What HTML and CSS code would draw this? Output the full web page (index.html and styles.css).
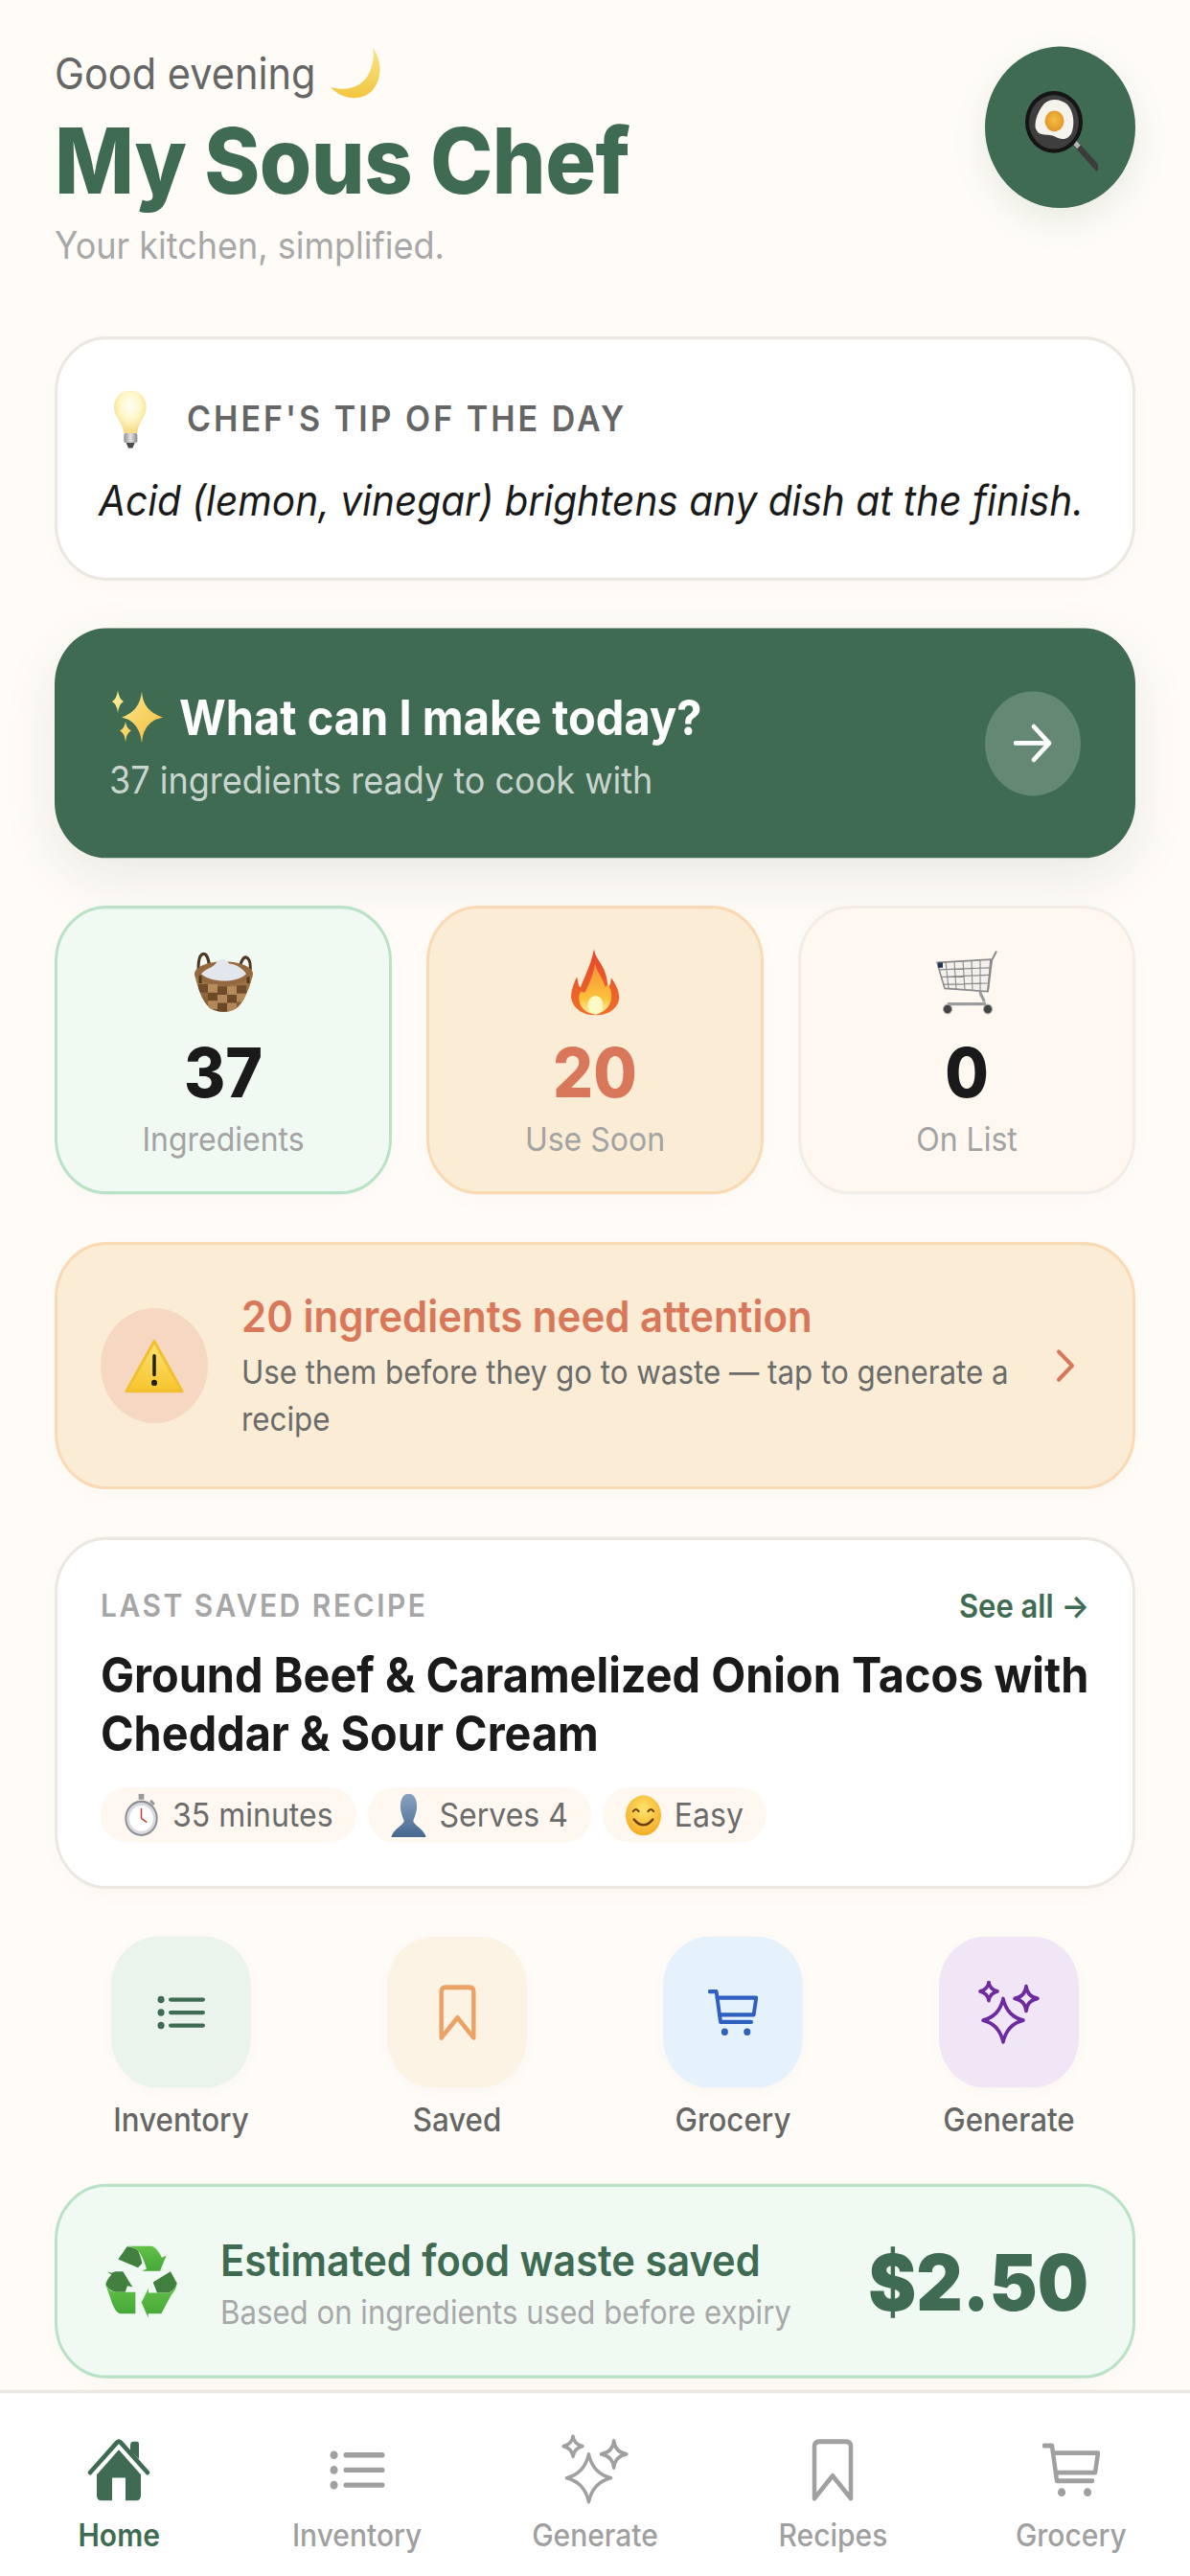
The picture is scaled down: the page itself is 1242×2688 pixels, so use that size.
FILE: index.html
```html
<!DOCTYPE html>
<html lang="en">
<head>
<meta charset="utf-8">
<title>My Sous Chef</title>
<link rel="stylesheet" href="styles.css">
</head>
<body>
<svg class="defs" width="0" height="0" aria-hidden="true">
  <defs>
    <linearGradient id="gMoon" x1="0" y1="0" x2="0" y2="1"><stop offset="0" stop-color="#f6e58a"/><stop offset="1" stop-color="#f3c63f"/></linearGradient>
    <radialGradient id="gBulb" cx=".5" cy=".36" r=".6"><stop offset="0" stop-color="#fffff4"/><stop offset=".55" stop-color="#fff6c8"/><stop offset="1" stop-color="#f6dc86"/></radialGradient>
    <linearGradient id="gBase" x1="0" y1="0" x2="1" y2="0"><stop offset="0" stop-color="#8f8f8f"/><stop offset=".5" stop-color="#e2e2e2"/><stop offset="1" stop-color="#8a8a8a"/></linearGradient>
    <linearGradient id="gSpark" x1="0" y1="0" x2="1" y2="1"><stop offset="0" stop-color="#fff0a0"/><stop offset="1" stop-color="#f3b933"/></linearGradient>
    <linearGradient id="gFire" x1="0" y1="0" x2="0" y2="1"><stop offset="0" stop-color="#e5452a"/><stop offset="1" stop-color="#f0702a"/></linearGradient>
    <linearGradient id="gFire2" x1="0" y1="0" x2="0" y2="1"><stop offset="0" stop-color="#f6913a"/><stop offset=".7" stop-color="#fcc33a"/><stop offset="1" stop-color="#fff6a8"/></linearGradient>
    <linearGradient id="gWarn" x1="0" y1="0" x2="0" y2="1"><stop offset="0" stop-color="#fde272"/><stop offset="1" stop-color="#f6c52e"/></linearGradient>
    <linearGradient id="gBust" x1="0" y1="0" x2="0" y2="1"><stop offset="0" stop-color="#8aa3c2"/><stop offset="1" stop-color="#46688f"/></linearGradient>
    <radialGradient id="gSmile" cx=".5" cy=".35" r=".7"><stop offset="0" stop-color="#ffe46b"/><stop offset="1" stop-color="#f3a71f"/></radialGradient>
    <linearGradient id="gRec" x1="0" y1="0" x2="0" y2="1"><stop offset="0" stop-color="#62c146"/><stop offset="1" stop-color="#46a73a"/></linearGradient>
    <radialGradient id="gYolk" cx=".5" cy=".45" r=".55"><stop offset="0" stop-color="#f5bf45"/><stop offset="1" stop-color="#df9427"/></radialGradient>
    <linearGradient id="gBasket" x1="0" y1="0" x2="0" y2="1"><stop offset="0" stop-color="#a87a48"/><stop offset="1" stop-color="#7d5630"/></linearGradient>
    <clipPath id="cBasket"><path d="M2 22C6 36 10 48 18 54 27 59 38 59 46 54 54 48 59 36 63 22Z"/></clipPath>
  </defs>
</svg>
<div class="page">
  <main class="content">
    <header class="top">
      <div class="top-text">
        <p class="greet">Good evening <svg class="e-moon" viewBox="0 0 52 50"><path fill="url(#gMoon)" d="M44 0C54 12 54 30 44 41 33 52 12 51 0 38 17 43 32 38 39 27 44 18 46 9 44 0Z"/></svg></p>
        <h1 class="title">My Sous Chef</h1>
        <p class="subtitle">Your kitchen, simplified.</p>
      </div>
      <div class="avatar">
        <svg class="e-pan" viewBox="0 0 76 77">
          <path d="M52 50 75 74" stroke="#3c3c3c" stroke-width="6" stroke-linecap="round"/>
          <path d="M50 48 56 54" stroke="#b5b5b5" stroke-width="5"/>
          <circle cx="30" cy="30" r="30" fill="#151515"/>
          <circle cx="30" cy="30" r="26" fill="#3e3e3e"/>
          <path fill="#f5f3ec" d="M20 12C27 6 38 8 44 13 50 19 52 30 49 39 46 47 38 48 31 44 25 41 14 44 12 38 8 33 13 19 20 12Z"/>
          <circle cx="30.500" cy="29" r="10" fill="url(#gYolk)"/>
        </svg>
      </div>
    </header>

    <section class="card tip">
      <div class="tip-head">
        <svg class="e-bulb" viewBox="9 36 180 186" preserveAspectRatio="none">
          <path fill="url(#gBulb)" d="M108 40C78 40 57 62 57 93 57 125 85 140 88 175H130C132 140 158 125 158 93 158 62 138 40 108 40Z"/>
          <rect x="88" y="175" width="42" height="30" rx="5" fill="url(#gBase)"/>
          <path d="M95 205H122L115 222H102Z" fill="#4a4a4a"/>
        </svg>
        <span class="tip-label">CHEF'S TIP OF THE DAY</span>
      </div>
      <p class="tip-text">Acid (lemon, vinegar) brightens any dish at the finish.</p>
    </section>

    <section class="hero">
      <div class="hero-text">
        <p class="hero-title"><svg class="e-spark" viewBox="0 0 56 51"><path fill="url(#gSpark)" d="M34 1Q35 20 56 26 35 30 34 51 32 30 13 26 32 20 34 1ZM9 0Q10 8 15 11 10 13 9 22 8 13 3 11 8 8 9 0ZM17 30Q18 37 23 39 18 41 17 50 16 41 11 39 16 37 17 30Z"/></svg><span>What can I make today?</span></p>
        <p class="hero-sub">37 ingredients ready to cook with</p>
      </div>
      <div class="hero-go">
        <svg class="i-arrow" viewBox="0 0 40 38"><path d="M2 19H37M21 3 37 19 21 35" fill="none" stroke="#fff" stroke-width="4.5" stroke-linecap="round" stroke-linejoin="round"/></svg>
      </div>
    </section>

    <section class="stats">
      <div class="stat stat-green">
        <div class="stat-icon">
          <svg class="e-basket" viewBox="0 0 65 58">
            <path d="M8 30C3 6 9 0 13 2 17 4 18 14 19 26M46 30C48 14 52 4 56 5 61 7 62 14 58 30" fill="none" stroke="#4e3620" stroke-width="3"/>
            <ellipse cx="32.500" cy="21" rx="30.500" ry="12" fill="#94693f"/>
            <path fill="#e3e6ec" d="M9 21C14 15 20 16 25 10 29 5 36 6 38 11 44 11 52 15 56 21 46 30 20 30 9 21Z"/>
            <path d="M2 22C6 36 10 48 18 54 27 59 38 59 46 54 54 48 59 36 63 22 52 36 14 36 2 22Z" fill="url(#gBasket)"/>
            <g clip-path="url(#cBasket)">
              <path d="M6 31H16V39H6ZM26 33H36V41H26ZM46 32H56V40H46ZM16 39H26V47H16ZM36 41H46V49H36ZM26 49H36V57H26Z" fill="#5f3f22" opacity=".7"/>
              <path d="M16 31H26V39H16ZM36 33H46V41H36ZM26 41H36V49H26ZM46 40H56V48H46ZM16 47H26V55H16ZM36 49H46V57H36Z" fill="#c49a68" opacity=".7"/>
            </g>
            <path d="M8 30C8 22 8 24 8 24M58 30V24" stroke="#4e3620" stroke-width="3"/>
          </svg>
        </div>
        <div class="stat-num">37</div>
        <div class="stat-label">Ingredients</div>
      </div>
      <div class="stat stat-orange">
        <div class="stat-icon">
          <svg class="e-fire" viewBox="0 0 51 64">
            <path fill="url(#gFire)" d="M24 0C25 9 33 14 36 24 38 30 38 35 39 36 42 35 41 31 42 28 47 34 51 42 50 49 48 59 37 64 25 64 13 64 2 58 0 47 0 39 4 31 6 27 8 32 7 36 10 37 13 28 21 16 24 0Z"/>
            <path fill="url(#gFire2)" d="M25 14C27 22 33 28 36 37 38 33 39 34 41 38 44 47 42 59 26 63 12 62 6 52 9 43 11 39 12 44 15 41 19 33 23 26 25 14Z"/>
            <ellipse cx="25.500" cy="54" rx="8" ry="9" fill="#fff9c4"/>
          </svg>
        </div>
        <div class="stat-num stat-num-warn">20</div>
        <div class="stat-label">Use Soon</div>
      </div>
      <div class="stat stat-cream">
        <div class="stat-icon">
          <svg class="e-cart" viewBox="0 0 64 63" fill="none" stroke="#8a8a8a">
            <path d="M1 12 57 9 54 40 9 37Z" fill="#e9e9e9" fill-opacity=".45" stroke-width="1.6"/>
            <path d="M10 11 13 37M19 11 21 38M28 10 30 38M37 10 38 39M46 10 46 39M3 19 56 17M5 26 55 24M7 33 54 32" stroke-width="1.1"/>
            <path d="M54 40 58 10 63 1" stroke-width="2"/>
            <path d="M46 40C47 46 50 46 50 50M12 52H52" stroke="#9c9c9c" stroke-width="3"/>
            <rect x="2" y="12" width="5" height="5" fill="#26365a" stroke="none"/>
            <circle cx="12" cy="57" r="4.500" fill="#444" stroke="#aaa"/>
            <circle cx="54" cy="57" r="4.500" fill="#444" stroke="#aaa"/>
          </svg>
        </div>
        <div class="stat-num">0</div>
        <div class="stat-label">On List</div>
      </div>
    </section>

    <section class="alert">
      <div class="alert-icon">
        <svg class="e-warn" viewBox="0 0 62 53">
          <path fill="url(#gWarn)" stroke="#f2c02e" stroke-width="3" stroke-linejoin="round" d="M31 3 60 51H2Z"/>
          <path d="M31 17V35" stroke="#222" stroke-width="3.500" stroke-linecap="round"/>
          <circle cx="31" cy="43" r="3" fill="#222"/>
        </svg>
      </div>
      <div class="alert-text">
        <p class="alert-title">20 ingredients need attention</p>
        <p class="alert-sub">Use them before they go to waste — tap to generate a recipe</p>
      </div>
      <svg class="i-chev" viewBox="0 0 20 33"><path d="M3 3 17 16.500 3 30" fill="none" stroke="#d9775a" stroke-width="4" stroke-linecap="round" stroke-linejoin="round"/></svg>
    </section>

    <section class="card recipe">
      <div class="recipe-head">
        <span class="recipe-label">LAST SAVED RECIPE</span>
        <span class="recipe-link">See all →</span>
      </div>
      <h2 class="recipe-title">Ground Beef &amp; Caramelized Onion Tacos with Cheddar &amp; Sour Cream</h2>
      <div class="chips">
        <span class="chip"><svg class="e-chip" viewBox="0 0 36 44">
          <rect x="15" y="0" width="6" height="6" fill="#9a9a9a"/><path d="M28 7 32 11" stroke="#999" stroke-width="3"/>
          <circle cx="18" cy="25" r="17" fill="#d8dade" stroke="#8d8f95" stroke-width="2"/><circle cx="18" cy="25" r="13" fill="#fff"/>
          <path d="M18 25V15M18 25 24 29" stroke="#c0392b" stroke-width="1.500"/></svg>35 minutes</span>
        <span class="chip"><svg class="e-chip" viewBox="0 0 38 44">
          <path fill="url(#gBust)" d="M19 0C26 0 28 7 28 13 28 19 25 24 24 28 26 33 36 36 38 44H0C2 36 12 33 14 28 13 24 10 19 10 13 10 7 12 0 19 0Z"/></svg>Serves 4</span>
        <span class="chip"><svg class="e-chip" viewBox="0 0 38 40">
          <ellipse cx="19" cy="20" rx="19" ry="20" fill="url(#gSmile)"/>
          <path d="M8 16Q11 12 14 16M24 16Q27 12 30 16" fill="none" stroke="#6b3f10" stroke-width="2" stroke-linecap="round"/>
          <path d="M9 24Q19 35 29 24" fill="none" stroke="#6b3f10" stroke-width="2.500" stroke-linecap="round"/></svg>Easy</span>
      </div>
    </section>

    <nav class="quick">
      <div class="quick-item">
        <div class="tile tile-green"><svg class="q-list" viewBox="0 0 50 33" fill="none" stroke="#3f6b52" stroke-width="4" stroke-linecap="round"><path d="M14 4H48M14 16.500H48M14 29H48"/><path d="M4 4H4.100M4 16.500H4.100M4 29H4.100" stroke-width="7"/></svg></div>
        <span class="quick-label">Inventory</span>
      </div>
      <div class="quick-item">
        <div class="tile tile-orange"><svg class="q-book" viewBox="0 0 44 61"><path d="M3 58V8Q3 3 8 3H36Q41 3 41 8V58L22 36Z" fill="none" stroke="#eba264" stroke-width="5" stroke-linejoin="round"/></svg></div>
        <span class="quick-label">Saved</span>
      </div>
      <div class="quick-item">
        <div class="tile tile-blue"><svg class="q-cart" viewBox="0 0 60 53" fill="none" stroke="#2f5fc0" stroke-width="4.500" stroke-linecap="round" stroke-linejoin="round"><path d="M2 3H10L15 37H52"/><path d="M11 10H58L55 29H14"/><path d="M20 48H20.100M47 48H47.100" stroke-width="8"/></svg></div>
        <span class="quick-label">Grocery</span>
      </div>
      <div class="quick-item">
        <div class="tile tile-purple"><svg class="q-gen" viewBox="0 0 64 61" fill="none" stroke="#6f2a9f" stroke-width="3.500" stroke-linejoin="round"><path d="M26 17Q30 34 47 38 30 42 26 59 22 42 5 38 22 34 26 17ZM11 1Q12 8 20 10 12 12 11 19 10 12 2 10 10 8 11 1ZM50 5Q51 15 62 17 51 19 50 29 49 19 38 17 49 15 50 5Z"/></svg></div>
        <span class="quick-label">Generate</span>
      </div>
    </nav>

    <section class="savings">
      <svg class="e-rec" viewBox="60 70 240 230" preserveAspectRatio="none">
        <path fill="url(#gRec)" d="M130 74H208Q222 76 240 110L254 103 234 152H178L192 145Q178 100 165 88 150 76 130 74Z"/>
        <path fill="#41803f" d="M103 115 131 75Q150 76 165 88 172 100 178 128L165 141Z"/>
        <path fill="#41803f" d="M68 153 82 158 95 153H118L148 202 132 198 125 218H95Q75 212 64 195 66 180 82 163Z"/>
        <path fill="url(#gRec)" d="M64 195Q75 215 95 218H157V285H108Q95 280 85 255Z"/>
        <path fill="#41803f" d="M212 187 267 153 287 190Q285 205 262 220H225Z"/>
        <path fill="url(#gRec)" d="M287 190Q285 210 270 225L238 285H197V298L176 250 198 206V220H262Q280 210 287 190Z"/>
      </svg>
      <div class="savings-text">
        <p class="savings-title">Estimated food waste saved</p>
        <p class="savings-sub">Based on ingredients used before expiry</p>
      </div>
      <div class="savings-amount">$2.50</div>
    </section>
  </main>

  <footer class="tabbar">
    <div class="tab tab-active">
      <div class="tab-icon"><svg class="t-home" viewBox="0 0 66 61"><path d="M3 33 31 4Q33 2 35 4L63 33" fill="none" stroke="#3f6b52" stroke-width="4.500" stroke-linecap="round" stroke-linejoin="round"/><path d="M45 7Q45 3 48 3H52Q54 3 54 6V20L45 12Z" fill="#3f6b52"/><path fill="#3f6b52" d="M33 11 56 35V55Q56 60 51 60H40V38H26V60H15Q10 60 10 55V35Z"/></svg></div>
        <span class="tab-label">Home</span>
    </div>
    <div class="tab">
      <div class="tab-icon"><svg class="t-list" viewBox="0 0 58 39" fill="none" stroke="#a0a0a0" stroke-width="5" stroke-linecap="round"><path d="M17 5H55M17 19.500H55M17 34H55"/><path d="M4.500 5H4.600M4.500 19.500H4.600M4.500 34H4.600" stroke-width="8"/></svg></div>
      <span class="tab-label">Inventory</span>
    </div>
    <div class="tab">
      <div class="tab-icon"><svg class="t-gen" viewBox="0 0 64 61" fill="none" stroke="#a0a0a0" stroke-width="3.200" stroke-linejoin="round"><path d="M26 17Q30 34 47 38 30 42 26 59 22 42 5 38 22 34 26 17ZM11 1Q12 8 20 10 12 12 11 19 10 12 2 10 10 8 11 1ZM50 5Q51 15 62 17 51 19 50 29 49 19 38 17 49 15 50 5Z"/></svg></div>
      <span class="tab-label">Generate</span>
    </div>
    <div class="tab">
      <div class="tab-icon"><svg class="t-book" viewBox="0 0 44 61"><path d="M3 58V8Q3 3 8 3H36Q41 3 41 8V58L22 36Z" fill="none" stroke="#a0a0a0" stroke-width="4.500" stroke-linejoin="round"/></svg></div>
      <span class="tab-label">Recipes</span>
    </div>
    <div class="tab">
      <div class="tab-icon"><svg class="t-cart" viewBox="0 0 60 53" fill="none" stroke="#a0a0a0" stroke-width="4.500" stroke-linecap="round" stroke-linejoin="round"><path d="M2 3H10L15 37H52"/><path d="M11 10H58L55 29H14"/><path d="M20 48H20.100M47 48H47.100" stroke-width="8"/></svg></div>
      <span class="tab-label">Grocery</span>
    </div>
  </footer>
</div>
</body>
</html>
```
FILE: styles.css
```css
* { box-sizing: border-box; margin: 0; padding: 0; }
html, body { height: 2688px; overflow: hidden; background: #fffcf7; }
body { font-family: Inter, "Liberation Sans", sans-serif; color: #1a1a1a; }
svg { display: block; flex: none; }
.defs { height: 0; width: 0; }

/* The source capture is stretched 8% vertically: the page is laid out at 2489px and scaled. */
.page {
  width: 1242px;
  height: 2489px;
  display: flex;
  flex-direction: column;
  transform: scaleY(1.08);
  transform-origin: top left;
}
.content {
  flex: 1;
  min-height: 0;
  padding: 45px 57px 0;
  display: flex;
  flex-direction: column;
  gap: 46px;
  overflow: hidden;
}
.content > * { flex: none; }

/* header */
.top { display: flex; justify-content: space-between; align-items: flex-start; padding-bottom: 19px; }
.greet { display: flex; align-items: center; gap: 16px; font-size: 41.5px; line-height: 52px; color: #666; }
.e-moon { width: 52px; height: 50px; }
.title { margin-top: 8px; font-size: 88px; line-height: 100px; font-weight: 800; color: #3f6b52; letter-spacing: -0.5px; }
.subtitle { margin-top: 9px; font-size: 36px; line-height: 46px; color: #a8a8a8; }
.avatar {
  width: 157px; height: 156px; border-radius: 50%;
  background: #3f6b52;
  display: flex; align-items: center; justify-content: center;
  box-shadow: 0 12px 36px rgba(61,107,80,.12);
}
.e-pan { width: 76px; height: 77px; transform: translate(1px, 3px); }

/* cards */
.card { background: #fff; border: 3px solid #ece7e0; border-radius: 54px; box-shadow: 0 6px 24px rgba(0,0,0,.02); }
.tip { padding: 46px 43px 44px; }
.tip-head { display: flex; align-items: center; gap: 32px; height: 60px; }
.e-bulb { width: 60px; height: 57px; }
.tip-label { font-size: 34px; font-weight: 600; letter-spacing: 3px; color: #666; }
.tip-text { margin-top: 20px; font-size: 40.600px; line-height: 60px; font-style: italic; color: #1a1a1a; white-space: nowrap; }

.hero {
  background: #3f6b52;
  border-radius: 54px;
  padding: 0 57px;
  height: 222px;
  display: flex;
  align-items: center;
  justify-content: space-between;
  box-shadow: 0 18px 54px rgba(61,70,60,.1);
}
.hero-text { padding-top: 7px; }
.hero-title { display: flex; align-items: center; gap: 17px; font-size: 47px; line-height: 64px; font-weight: 700; color: #fff; }
.e-spark { width: 56px; height: 51px; }
.hero-sub { font-size: 36px; line-height: 58px; color: rgba(255,255,255,.72); }
.hero-go { width: 100px; height: 101px; border-radius: 50%; background: rgba(255,255,255,.2); display: flex; align-items: center; justify-content: center; }
.i-arrow { width: 40px; height: 38px; }

/* stats */
.stats { display: grid; grid-template-columns: repeat(3, 1fr); gap: 36px; }
.stat { border: 3px solid; border-radius: 54px; padding: 36px 0 28px; display: flex; flex-direction: column; align-items: center; box-shadow: 0 6px 24px rgba(0,0,0,.02); }
.stat-green { background: #f0faf3; border-color: #b9e2c7; }
.stat-orange { background: #fbecd5; border-color: #f9dab4; }
.stat-cream { background: #fef8f0; border-color: #f2ede6; }
.stat-icon { height: 70px; display: flex; align-items: center; }
.e-basket { width: 65px; height: 58px; }
.e-fire { width: 51px; height: 64px; }
.e-cart { width: 64px; height: 63px; }
.stat-num { margin-top: 12px; font-size: 66px; line-height: 80px; font-weight: 800; color: #1a1a1a; }
.stat-num-warn { color: #d9775a; }
.stat-label { margin-top: 3px; font-size: 32px; line-height: 44px; color: #a3a3a3; }

/* alert */
.alert {
  background: #fbecd5;
  border: 3px solid #f9dab4;
  border-radius: 54px;
  padding: 0 60px 0 45px;
  height: 239px;
  display: flex;
  align-items: center;
  box-shadow: 0 6px 24px rgba(0,0,0,.02);
}
.alert-icon { width: 112px; height: 111px; border-radius: 50%; background: #f6d7c2; display: flex; align-items: center; justify-content: center; flex: none; }
.e-warn { width: 62px; height: 53px; }
.alert-text { flex: 1; margin-left: 35px; padding-bottom: 4px; }
.alert-title { font-size: 42px; line-height: 60px; font-weight: 600; color: #d9775a; margin-bottom: 2px; }
.alert-sub { font-size: 31.300px; line-height: 45px; color: #6b6b6b; }
.i-chev { width: 20px; height: 33px; margin-left: 24px; }

/* recipe */
.recipe { padding: 43px 43px 42px 45px; }
.recipe-head { display: flex; justify-content: space-between; align-items: center; height: 40px; margin-right: 2px; }
.recipe-label { font-size: 30px; font-weight: 600; letter-spacing: 2.5px; color: #a6a6a6; }
.recipe-link { font-size: 31px; font-weight: 600; color: #3f6b52; }
.recipe-title { margin-top: 19px; font-size: 46.800px; line-height: 57px; font-weight: 700; color: #1a1a1a; }
.chips { display: flex; gap: 12px; margin-top: 23px; }
.chip { display: flex; align-items: center; gap: 14px; height: 53px; padding: 0 24px; border-radius: 27px; background: #fef8f0; font-size: 32px; color: #6b6b6b; }
.e-chip { width: 37px; height: 42px; }

/* quick actions */
.quick { display: grid; grid-template-columns: repeat(4, 1fr); gap: 24px; }
.quick-item { display: flex; flex-direction: column; align-items: center; }
.tile { width: 146px; height: 146px; border-radius: 48px; display: flex; align-items: center; justify-content: center; box-shadow: 0 4px 18px rgba(0,0,0,.025); }
.tile-green { background: #ebf4ec; }
.tile-orange { background: #fdf3e5; }
.tile-blue { background: #e6f2fb; }
.tile-purple { background: #f0e6f5; }
.q-list { width: 50px; height: 33px; }
.q-book { width: 39px; height: 55px; }
.q-cart { width: 52px; height: 47px; }
.q-gen { width: 64px; height: 61px; }
.quick-label { margin-top: 15px; font-size: 31.300px; line-height: 32px; font-weight: 500; color: #666; }

/* savings */
.savings {
  background: #f0faf3;
  border: 3px solid #b9e2c7;
  border-radius: 54px;
  height: 188px;
  padding: 0 46px 0 51px;
  display: flex;
  align-items: center;
  box-shadow: 0 6px 24px rgba(0,0,0,.02);
}
.e-rec { width: 80px; height: 71px; margin-left: -2px; }
.savings-text { flex: 1; margin-left: 41px; padding-top: 6px; }
.savings-title { font-size: 41.600px; line-height: 54px; font-weight: 600; color: #3f6b52; }
.savings-sub { font-size: 31.200px; line-height: 46px; color: #a8a8a8; }
.savings-amount { font-size: 75px; font-weight: 900; color: #3f6b52; }

/* tab bar */
.tabbar { flex: none; height: 180px; background: #fff; border-top: 3px solid #ece7e0; display: flex; padding-top: 34px; }
.tab { flex: 1; display: flex; flex-direction: column; align-items: center; }
.tab-icon { height: 80px; display: flex; align-items: center; justify-content: center; }
.t-home { width: 66px; height: 61px; }
.t-list { width: 58px; height: 39px; }
.t-gen { width: 70px; height: 68px; }
.t-book { width: 44px; height: 61px; }
.t-cart { width: 60px; height: 53px; }
.tab-label { margin-top: 5px; font-size: 30px; line-height: 36px; font-weight: 500; color: #a0a0a0; }
.tab-active .tab-label { color: #3f6b52; font-weight: 600; }
```
